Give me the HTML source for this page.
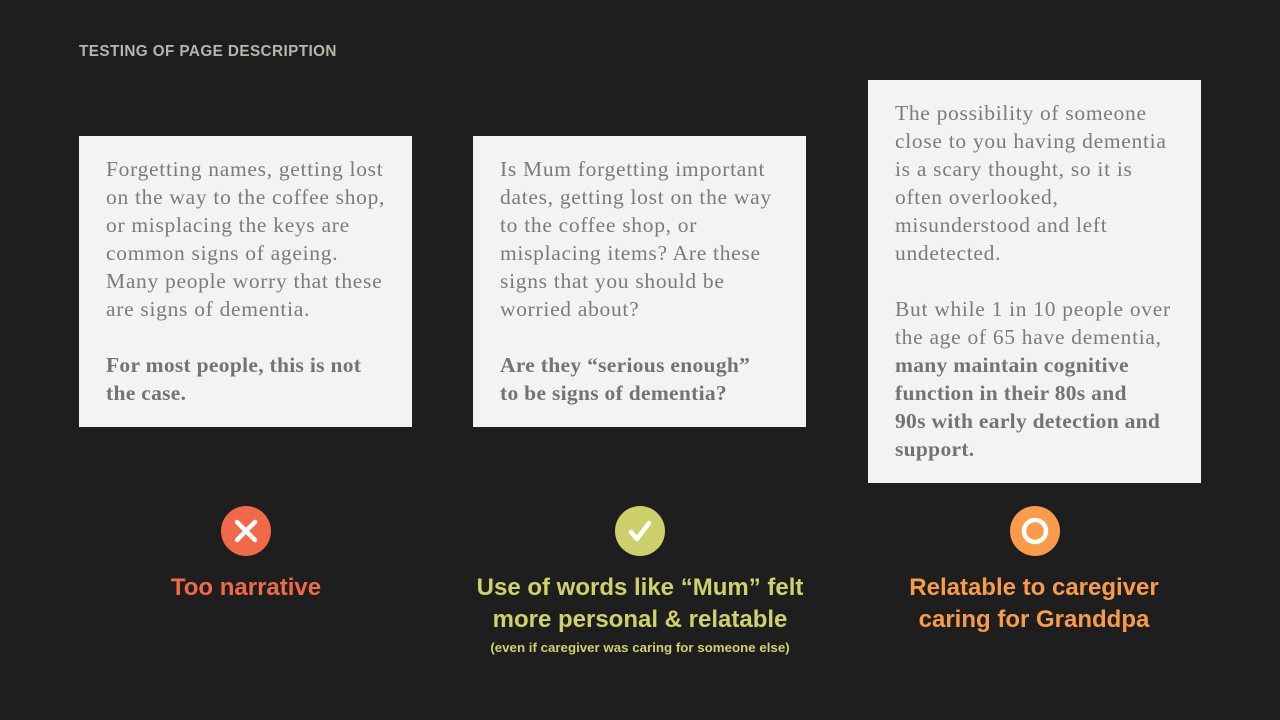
<!DOCTYPE html>
<html><head><style>
body{margin:0;width:1280px;height:720px;background:#1e1e1e;position:relative;overflow:hidden;font-family:"Liberation Sans",sans-serif}
.h{position:absolute;left:79px;top:43px;color:#b9b5ad;font-weight:bold;font-size:15.3px;letter-spacing:0.4px}
.box{position:absolute;background:#f3f3f3;width:333px;box-sizing:border-box;padding:19px 0 0 27px;font-family:"Liberation Serif",serif;font-size:21.5px;line-height:28px;color:#7b7b7b;white-space:nowrap;letter-spacing:0.7px}
.box b{color:#737373;letter-spacing:0.3px}
.ic{position:absolute;width:50px;height:50px;border-radius:50%;top:506px}
.lab{position:absolute;width:400px;text-align:center;font-weight:bold;font-size:24px;line-height:32px;top:572px}
.sm{position:absolute;width:400px;text-align:center;font-weight:bold;font-size:13.3px;top:640px;color:#cfd16a;left:440px}
</style></head><body>
<div class="h">TESTING OF PAGE DESCRIPTION</div>
<div class="box" style="left:79px;top:136px;height:291px">Forgetting names, getting lost<br>on the way to the coffee shop,<br>or misplacing the keys are<br>common signs of ageing.<br>Many people worry that these<br>are signs of dementia.<br><br><b>For most people, this is not<br>the case.</b></div>
<div class="box" style="left:473px;top:136px;height:291px">Is Mum forgetting important<br>dates, getting lost on the way<br>to the coffee shop, or<br>misplacing items? Are these<br>signs that you should be<br>worried about?<br><br><b>Are they “serious enough”<br>to be signs of dementia?</b></div>
<div class="box" style="left:868px;top:80px;height:403px">The possibility of someone<br>close to you having dementia<br>is a scary thought, so it is<br>often overlooked,<br>misunderstood and left<br>undetected.<br><br>But while 1 in 10 people over<br>the age of 65 have dementia,<br><b>many maintain cognitive<br>function in their 80s and<br>90s with early detection and<br>support.</b></div>
<div class="ic" style="left:221px;background:#f06a4a"><svg width="50" height="50"><path d="M16 16L34 34M34 16L16 34" stroke="#fff" stroke-width="4.5" stroke-linecap="round"/></svg></div>
<div class="ic" style="left:615px;background:#cdd06a"><svg width="50" height="50"><path d="M16 26L22 33L34 17" stroke="#fff" stroke-width="4.5" fill="none" stroke-linecap="round" stroke-linejoin="round"/></svg></div>
<div class="ic" style="left:1010px;background:#f99c4a"><svg width="50" height="50"><circle cx="25" cy="25" r="11" stroke="#fff" stroke-width="4.5" fill="none"/></svg></div>
<div class="lab" style="left:46px;color:#f06a4a">Too narrative</div>
<div class="lab" style="left:440px;color:#cfd16a">Use of words like “Mum” felt<br>more personal &amp; relatable</div>
<div class="sm">(even if caregiver was caring for someone else)</div>
<div class="lab" style="left:834px;color:#f99c4a">Relatable to caregiver<br>caring for Granddpa</div>
</body></html>
